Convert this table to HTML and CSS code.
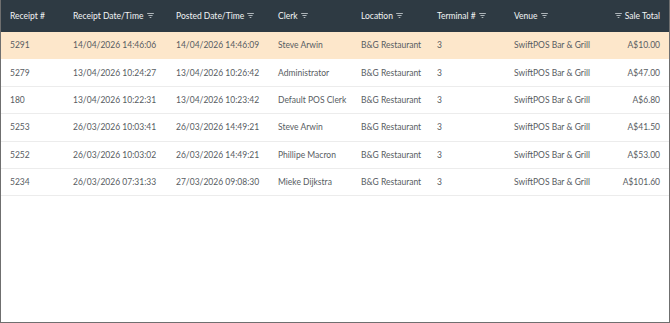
FILE: index.html
```html
<!DOCTYPE html>
<html>
<head>
<meta charset="utf-8">
<link rel="stylesheet" href="styles.css">
</head>
<body>
<div class="frame">
<table class="grid">
<colgroup>
<col class="c1"><col class="c2"><col class="c3"><col class="c4"><col class="c5"><col class="c6"><col class="c7"><col class="c8">
</colgroup>
<thead>
<tr>
<th>Receipt #</th>
<th>Receipt Date/Time <svg class="flt" viewBox="0 0 8 6"><rect x="0" y="0" width="8" height="1"/><rect x="1.5" y="2.5" width="5" height="1"/><rect x="3" y="5" width="2" height="1"/></svg></th>
<th>Posted Date/Time <svg class="flt" viewBox="0 0 8 6"><rect x="0" y="0" width="8" height="1"/><rect x="1.5" y="2.5" width="5" height="1"/><rect x="3" y="5" width="2" height="1"/></svg></th>
<th>Clerk <svg class="flt" viewBox="0 0 8 6"><rect x="0" y="0" width="8" height="1"/><rect x="1.5" y="2.5" width="5" height="1"/><rect x="3" y="5" width="2" height="1"/></svg></th>
<th>Location <svg class="flt" viewBox="0 0 8 6"><rect x="0" y="0" width="8" height="1"/><rect x="1.5" y="2.5" width="5" height="1"/><rect x="3" y="5" width="2" height="1"/></svg></th>
<th>Terminal # <svg class="flt" viewBox="0 0 8 6"><rect x="0" y="0" width="8" height="1"/><rect x="1.5" y="2.5" width="5" height="1"/><rect x="3" y="5" width="2" height="1"/></svg></th>
<th>Venue <svg class="flt" viewBox="0 0 8 6"><rect x="0" y="0" width="8" height="1"/><rect x="1.5" y="2.5" width="5" height="1"/><rect x="3" y="5" width="2" height="1"/></svg></th>
<th class="num"><svg class="flt" viewBox="0 0 8 6"><rect x="0" y="0" width="8" height="1"/><rect x="1.5" y="2.5" width="5" height="1"/><rect x="3" y="5" width="2" height="1"/></svg> Sale Total</th>
</tr>
</thead>
<tbody>
<tr class="sel"><td>5291</td><td>14/04/2026 14:46:06</td><td>14/04/2026 14:46:09</td><td>Steve Arwin</td><td>B&amp;G Restaurant</td><td>3</td><td>SwiftPOS Bar &amp; Grill</td><td class="num">A$10.00</td></tr>
<tr><td>5279</td><td>13/04/2026 10:24:27</td><td>13/04/2026 10:26:42</td><td>Administrator</td><td>B&amp;G Restaurant</td><td>3</td><td>SwiftPOS Bar &amp; Grill</td><td class="num">A$47.00</td></tr>
<tr><td>180</td><td>13/04/2026 10:22:31</td><td>13/04/2026 10:23:42</td><td>Default POS Clerk</td><td>B&amp;G Restaurant</td><td>3</td><td>SwiftPOS Bar &amp; Grill</td><td class="num">A$6.80</td></tr>
<tr><td>5253</td><td>26/03/2026 10:03:41</td><td>26/03/2026 14:49:21</td><td>Steve Arwin</td><td>B&amp;G Restaurant</td><td>3</td><td>SwiftPOS Bar &amp; Grill</td><td class="num">A$41.50</td></tr>
<tr><td>5252</td><td>26/03/2026 10:03:02</td><td>26/03/2026 14:49:21</td><td>Phillipe Macron</td><td>B&amp;G Restaurant</td><td>3</td><td>SwiftPOS Bar &amp; Grill</td><td class="num">A$53.00</td></tr>
<tr><td>5234</td><td>26/03/2026 07:31:33</td><td>27/03/2026 09:08:30</td><td>Mieke Dijkstra</td><td>B&amp;G Restaurant</td><td>3</td><td>SwiftPOS Bar &amp; Grill</td><td class="num">A$101.60</td></tr>
</tbody>
</table>
</div>
</body>
</html>
```
FILE: styles.css
```css
html, body {
  margin: 0;
  padding: 0;
  background: #fff;
}
.frame {
  box-sizing: border-box;
  width: 670px;
  height: 323px;
  border: 1px solid #6f6f6f;
  border-top: none;
  background: #fff;
  overflow: hidden;
}
.grid {
  width: 100%;
  border-collapse: collapse;
  table-layout: fixed;
  font-family: Lato, "Noto Sans", sans-serif;
  font-size: 8.5px;
}
.c1 { width: 63px; }
.c2 { width: 103px; }
.c3 { width: 102px; }
.c4 { width: 83px; }
.c5 { width: 76px; }
.c6 { width: 77px; }
.c7 { width: 90px; }
.c8 { width: auto; }
thead th {
  background: #2e3a43;
  color: #f2f4f5;
  font-weight: 400;
  text-align: left;
  height: 32px;
  padding: 0 0 0 9px;
  white-space: nowrap;
}
th.num, td.num {
  text-align: right;
  padding-right: 9px;
}
.flt {
  width: 7px;
  height: 5px;
  fill: #c9cfd3;
  vertical-align: 1px;
  margin-left: 1px;
}
th.num .flt { margin: 0 1px 0 0; }
tbody td {
  height: 26.4px;
  padding: 0 0 0 9px;
  color: #575c62;
  border-bottom: 1px solid #ececec;
  white-space: nowrap;
}
tbody tr.sel td {
  background: #fde7cb;
  border-bottom-color: #fde7cb;
}
```
